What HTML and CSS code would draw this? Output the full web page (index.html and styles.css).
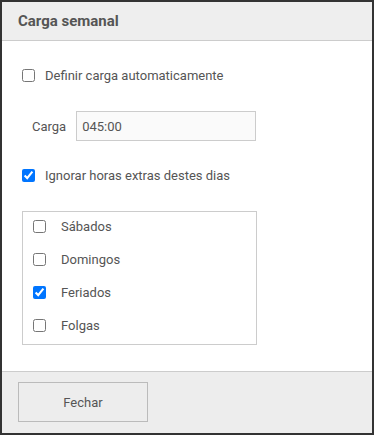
FILE: index.html
```html
<!DOCTYPE html>
<html lang="pt-BR">

<head>
    <meta charset="UTF-8">
    <meta name="viewport" content="width=device-width, initial-scale=1.0">
    <title>Carga semanal</title>
    <link rel="stylesheet" href="styles.css">
</head>

<body>
    <div class="dialog">
        <header class="dialog-header">
            <h1>Carga semanal</h1>
        </header>
        <section class="dialog-body">
            <label class="check-row">
                <input type="checkbox" id="auto" name="auto">
                <span>Definir carga automaticamente</span>
            </label>
            <div class="field-row">
                <label for="carga">Carga</label>
                <input type="text" id="carga" name="carga" value="045:00">
            </div>
            <label class="check-row">
                <input type="checkbox" id="ignorar" name="ignorar" checked>
                <span>Ignorar horas extras destes dias</span>
            </label>
            <div class="days-box">
                <label class="day-row"><input type="checkbox" name="sab"><span>Sábados</span></label>
                <label class="day-row"><input type="checkbox" name="dom"><span>Domingos</span></label>
                <label class="day-row"><input type="checkbox" name="fer" checked><span>Feriados</span></label>
                <label class="day-row"><input type="checkbox" name="fol"><span>Folgas</span></label>
            </div>
        </section>
        <footer class="dialog-footer">
            <button type="button" class="btn-close">Fechar</button>
        </footer>
    </div>
</body>

</html>
```

FILE: styles.css
```css
* {
    margin: 0;
    padding: 0;
    box-sizing: border-box;
}

html,
body {
    height: 100%;
}

body {
    background-color: #333333;
    color: #555555;
    font-family: 'Roboto', 'Liberation Sans', sans-serif;
    font-size: 13px;
}

.dialog {
    display: flex;
    flex-direction: column;
    height: 100%;
    border: 2px solid #333333;
    background-color: #ffffff;
}

.dialog-header {
    height: 39px;
    padding: 0 16px;
    display: flex;
    align-items: center;
    background-color: #eeeeee;
    border-bottom: 1px solid #cccccc;
}

.dialog-header h1 {
    font-size: 15px;
    font-weight: 700;
    color: #555555;
}

.dialog-body {
    flex: 1;
    padding: 27px 20px 0;
}

.check-row {
    display: flex;
    align-items: center;
    gap: 10px;
    height: 14px;
}

input[type="checkbox"] {
    width: 13px;
    height: 13px;
    margin: 0;
}

.field-row {
    display: flex;
    align-items: center;
    gap: 10px;
    margin: 29px 0 27px 10px;
}

.field-row input {
    width: 180px;
    height: 30px;
    padding: 0 5px;
    border: 1px solid #cccccc;
    background-color: #fafafa;
    color: #555555;
    font-family: inherit;
    font-size: 13px;
}

.days-box {
    display: flex;
    flex-direction: column;
    gap: 7px;
    width: 235px;
    margin-top: 29px;
    padding: 1px 10px 6px;
    border: 1px solid #cccccc;
}

.day-row {
    display: flex;
    align-items: center;
    gap: 15px;
    height: 26px;
}

.dialog-footer {
    height: 62px;
    padding: 10px 16px;
    background-color: #ededed;
    border-top: 1px solid #cccccc;
}

.btn-close {
    width: 130px;
    height: 40px;
    border: 1px solid #bbbbbb;
    background-color: #ededed;
    color: #555555;
    font-family: inherit;
    font-size: 13px;
}
```
